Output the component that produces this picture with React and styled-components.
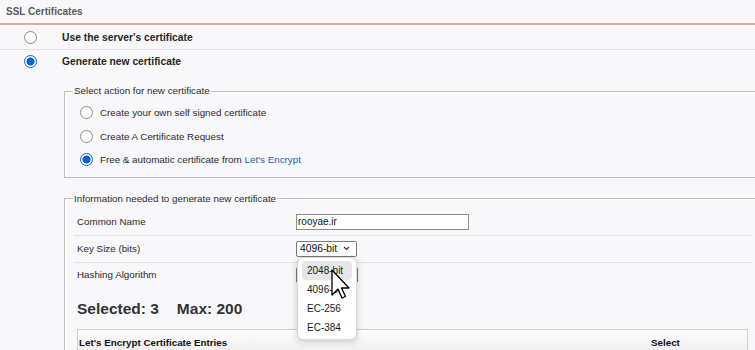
import React from 'react'
import styled, { createGlobalStyle, css } from 'styled-components'

const GlobalStyle = createGlobalStyle`
  html, body {
    margin: 0;
    background: #f8f7fa;
    overflow: hidden;
  }
  body {
    font-family: 'Liberation Sans', Arial, sans-serif;
    color: #2a2a2a;
  }
`

const Page = styled.div`
  width: 755px;
  height: 350px;
  overflow: hidden;
  font-size: 9.8px;
`

const Title = styled.div`
  height: 23px;
  padding-left: 6px;
  display: flex;
  align-items: center;
  font-size: 10px;
  font-weight: bold;
  color: #5c5c5c;
  border-bottom: 2px solid #e2ab9c;
`

const OptionRow = styled.label`
  display: flex;
  align-items: center;
  height: ${props => props.height || '24px'};
  padding-left: 24px;
  font-size: 10.3px;
  font-weight: bold;
  color: #262626;
  ${props =>
    props.divided &&
    css`
      border-bottom: 1px solid #e3e1e5;
    `};
  & > input {
    margin-right: 25px;
  }
`

const Radio = styled.input.attrs({ type: 'radio' })`
  appearance: none;
  flex: none;
  width: 13px;
  height: 13px;
  margin: 0;
  border-radius: 50%;
  border: 1px solid #8a8a8a;
  background: #fff;
  box-sizing: border-box;
  &:checked {
    border-color: #0b62d6;
    background: radial-gradient(circle, #0b62d6 0 3.8px, #fff 4.3px);
  }
`

const Indent = styled.div`
  margin: 12px -6px 0 64px;
  display: flex;
  flex-direction: column;
  gap: 15px;
`

const Fieldset = styled.fieldset`
  margin: 0;
  padding: 0 8px 0 0;
  min-width: 0;
  border: 1px solid #bebdc0;
  box-shadow: inset 1px 1px 0 #fff;
`

const Legend = styled.legend`
  margin-left: 8px;
  padding: 0 1px;
  font-size: 9.8px;
  line-height: 12px;
`

const ChoiceList = styled.div`
  padding: 4px 0 5px 15px;
`

const Choice = styled.label`
  display: flex;
  align-items: center;
  gap: 7px;
  height: 23.5px;
  font-size: 9.8px;
`

const Link = styled.a`
  color: #1c5fae;
  text-decoration: none;
  margin-left: 3px;
`

const InfoBody = styled.div`
  padding: 4px 0 0 9px;
`

const FieldRow = styled.div`
  display: grid;
  grid-template-columns: 219px 1fr;
  align-items: center;
  height: ${props => props.height || '26px'};
  padding-left: 3px;
  ${props =>
    props.divided &&
    css`
      border-bottom: 1px solid #e2e1e4;
    `};
`

const TextInput = styled.div`
  width: 173px;
  height: 16px;
  box-sizing: border-box;
  border: 1px solid #8d8d8d;
  background: #fff;
  padding-left: 1px;
  font-size: 10px;
  line-height: 14px;
  color: #111;
`

const SelectWrap = styled.div`
  position: relative;
  width: 61px;
`

const SelectBox = styled.div`
  display: flex;
  align-items: center;
  justify-content: space-between;
  width: ${props => props.width || '61px'};
  height: 16px;
  box-sizing: border-box;
  padding: 0 6px 0 3px;
  border: 1px solid #7a7a7a;
  border-radius: 2px;
  background: #fff;
  font-size: 10.3px;
  color: #111;
`

const Popup = styled.div`
  position: absolute;
  top: 100%;
  left: 1px;
  width: 60px;
  box-sizing: border-box;
  padding: 3px 4px 2px 4px;
  background: #fff;
  border: 1px solid #d6d6d6;
  border-radius: 6px;
  box-shadow: 0 2px 7px rgba(0, 0, 0, 0.18);
  z-index: 2;
`

const PopupItem = styled.div`
  height: 19px;
  display: flex;
  align-items: center;
  padding-left: 5px;
  border-radius: 4px;
  font-size: 10px;
  color: #1a1a1a;
  ${props =>
    props.active &&
    css`
      background: #e6e6e6;
    `};
`

const Cursor = styled.svg`
  position: absolute;
  left: 33px;
  top: 11px;
  width: 19px;
  height: 30px;
  z-index: 3;
`

const Counts = styled.div`
  display: flex;
  gap: 18px;
  margin: 13px 0 0 3px;
  font-size: 15.5px;
  font-weight: bold;
  line-height: 18px;
  color: #333;
`

const Table = styled.div`
  margin: 11px 4px 0 3px;
  border: 1px solid #cfcfcf;
  border-bottom: none;
`

const TableHead = styled.div`
  display: grid;
  grid-template-columns: 1fr 96px;
  align-items: center;
  height: 26px;
  padding-left: 1px;
  background: linear-gradient(#fefefe, #ececec);
  font-size: 9.8px;
  font-weight: bold;
  color: #111;
`

const Chevron = () => (
  <svg width="7" height="5" viewBox="0 0 7 5">
    <polyline points="1,1 3.5,3.5 6,1" fill="none" stroke="#333" strokeWidth="1.1" />
  </svg>
)

export default function App() {
  return (
    <Page>
      <GlobalStyle />
      <Title>SSL Certificates</Title>
      <OptionRow divided>
        <Radio name="mode" />
        Use the server's certificate
      </OptionRow>
      <OptionRow height="23px">
        <Radio name="mode" defaultChecked />
        Generate new certificate
      </OptionRow>

      <Indent>
        <Fieldset>
          <Legend>Select action for new certificate</Legend>
          <ChoiceList>
            <Choice>
              <Radio name="action" />
              Create your own self signed certificate
            </Choice>
            <Choice>
              <Radio name="action" />
              Create A Certificate Request
            </Choice>
            <Choice>
              <Radio name="action" defaultChecked />
              <span>
                Free &amp; automatic certificate from<Link>Let's Encrypt</Link>
              </span>
            </Choice>
          </ChoiceList>
        </Fieldset>

        <Fieldset>
          <Legend>Information needed to generate new certificate</Legend>
          <InfoBody>
            <FieldRow divided>
              <span>Common Name</span>
              <TextInput>rooyae.ir</TextInput>
            </FieldRow>
            <FieldRow divided>
              <span>Key Size (bits)</span>
              <SelectWrap>
                <SelectBox>
                  4096-bit
                  <Chevron />
                </SelectBox>
                <Popup>
                  <PopupItem active>2048-bit</PopupItem>
                  <PopupItem>4096-bit</PopupItem>
                  <PopupItem>EC-256</PopupItem>
                  <PopupItem>EC-384</PopupItem>
                  <Cursor viewBox="0 0 19 30">
                    <path
                      d="M1 1 L1 26 L7 20 L11 29 L14.5 27.5 L10.5 19 L18 19 Z"
                      fill="#fff"
                      stroke="#000"
                      strokeWidth="1.3"
                      strokeLinejoin="round"
                    />
                  </Cursor>
                </Popup>
              </SelectWrap>
            </FieldRow>
            <FieldRow height="24px">
              <span>Hashing Algorithm</span>
              <SelectBox width="62px">
                SHA-256
                <Chevron />
              </SelectBox>
            </FieldRow>
            <Counts>
              <span>Selected: 3</span>
              <span>Max: 200</span>
            </Counts>
            <Table>
              <TableHead>
                <span>Let's Encrypt Certificate Entries</span>
                <span>Select</span>
              </TableHead>
            </Table>
          </InfoBody>
        </Fieldset>
      </Indent>
    </Page>
  )
}
